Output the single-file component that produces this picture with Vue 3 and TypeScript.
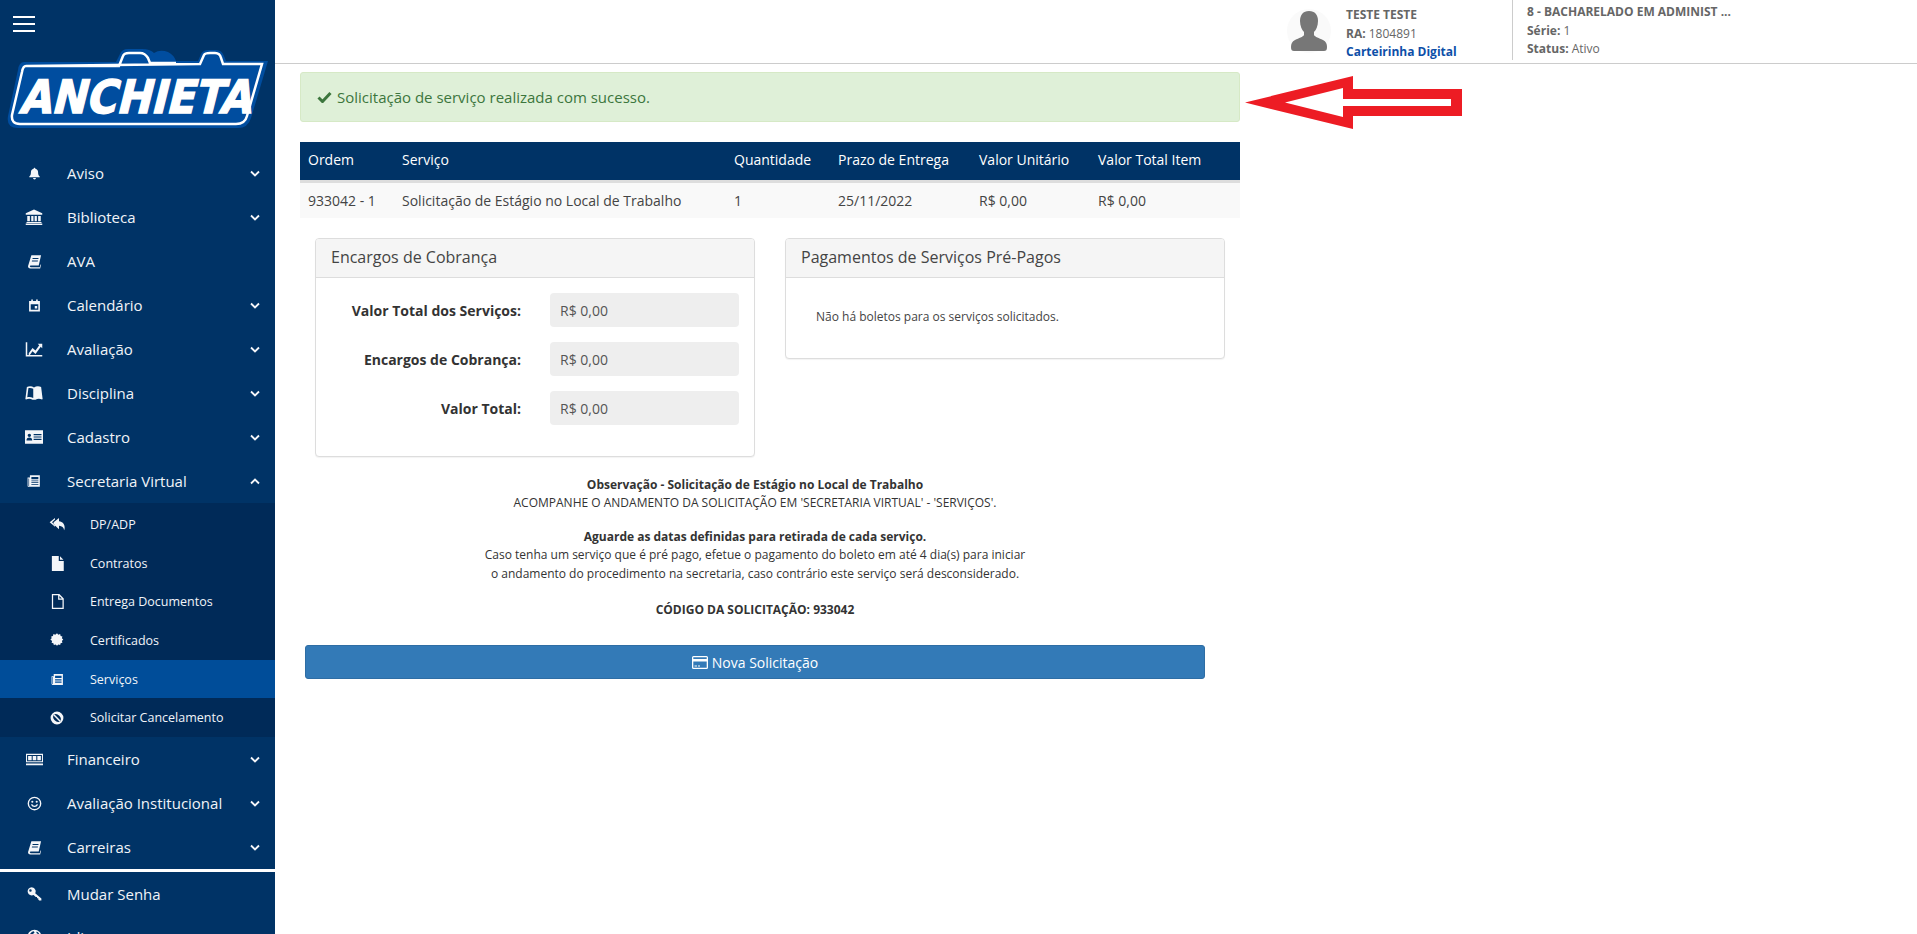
<script setup lang="ts">
interface MenuItem { label: string; icon: string; w: number; chevron?: 'down' | 'up' }

const icons: Record<string, string> = {
  bell: 'M12 1.5a1.6 1.6 0 0 1 1.6 1.7c3.4.7 5 3.2 5 6.3 0 4 1 6.3 3 8v1.5H2.400v-1.500c2-1.700 3-4 3-8 0-3.100 1.600-5.600 5-6.300A1.600 1.600 0 0 1 12 1.500zM9.300 20.500h5.400a2.700 2.700 0 0 1-5.400 0z',
  bank: 'M12 2 23 7v2H1V7zM3 10.500h3.500v7H3zM8.300 10.500h3v7h-3zM12.800 10.500h3v7h-3zM17.500 10.500H21v7h-3.500zM2 18.500h20V20H2zM1 20.800h22V22.500H1z',
  book: 'M7 2h15.500l-3.800 16.500H6c-1 0-1.500.6-1.500 1.200S5 21 6 21h14.500l1-4.300 1 .6L21 23H5.500C3 23 1.300 21.500 1.700 19zM9 6.500 8.700 8h9.500l.3-1.500zM8 10.500 7.700 12h9.500l.3-1.500z',
  calendar: 'M6 1h3v2.500h6V1h3v2.500h4V23H2V3.500h4zM5 9.500V20h14V9.500zM12.500 13h4.500v4.500h-4.500z',
  chart: 'M1 3h2v17h20v2H1zM5 17.500l5-7 4 3.500 5-7-2-2h6v6l-2-2-7 9.500-4-3.500-3.500 5H5z',
  open: 'M2.500 4c3-1.200 6.500-1.200 9.500.5 3-1.700 6.500-1.700 9.500-.5l2 16-.8.700c-3-1.300-6.200-1.200-8.700.3h-4c-2.500-1.500-5.700-1.600-8.700-.3L.5 20zM4.500 5.500 3 17.800c2.700-.6 5-.4 8 1V6.400C8.800 5.200 6.500 5 4.500 5.500z',
  card: 'M0 3h24v18H0zM11.500 8v1.600H22V8zM11.500 11.200v1.600H22v-1.600zM11.500 14.400V16H22v-1.600zM5.800 7.500a2.300 2.300 0 1 0 0 4.600 2.300 2.300 0 0 0 0-4.600zM2 16.500h7.600c0-2.500-1.300-4-3.800-4S2 14 2 16.500z',
  news: 'M5 2h17v20H3a2 2 0 0 1-2-2V6h4zM2.500 7.500V20c0 .4.300.5.500.5s.6-.1.6-.5V7.500zM7.500 5v4H19.500V5zM7.500 11v1.500h12V11zM7.500 14v1.500h12V14zM7.500 17v1.500h12V17z',
  reply: 'M9 3v2.200L4.600 9.500 9 13.800V16L1 9.500zM15 3v5c5.500.4 8.500 4.500 8.500 9.500 0 1.300-.2 2.500-.8 3.800-.7-3.800-3-6.300-7.700-6.500v5L7 12.500 7 9.500z',
  file: 'M3 0h11v8h8v16H3zM16 .5l5.500 5.500H16z',
  fileo: 'M3 0h12l7 7v17H3zM5 2v20h15V9h-7V2zM15 3v4h4z',
  cert: 'M12 .5l2.300 2.300 3.100-.9.800 3.100 3.100.8-.9 3.100 2.300 2.300-2.300 2.300.9 3.100-3.100.8-.8 3.100-3.100-.9-2.300 2.400-2.300-2.400-3.100.9-.8-3.100-3.100-.8.9-3.100L.6 11.200l2.300-2.300-.9-3.100 3.100-.8.8-3.100 3.100.9z',
  ban: 'M12 1a11 11 0 1 1 0 22 11 11 0 0 1 0-22zM7 5.200A8.500 8.500 0 0 0 18.800 17zM17 18.800 5.200 7A8.500 8.500 0 0 1 17 18.800z',
  money: 'M0 4h24v12H0zM1.500 5.500v9h21v-9zM3 7h5v6H3zM9.500 7h5v6h-5zM16 7h5v6h-5zM0 17.500h24V20H0z',
  smile: 'M12 1a11 11 0 1 1 0 22 11 11 0 0 1 0-22zM12 3.200a8.800 8.800 0 1 0 0 17.600 8.800 8.800 0 0 0 0-17.600zM8.500 7.500a1.700 1.700 0 1 1 0 3.400 1.700 1.700 0 0 1 0-3.400zM15.500 7.500a1.700 1.700 0 1 1 0 3.400 1.700 1.700 0 0 1 0-3.400zM6.500 13.500l1.800-.6c.8 1.800 2 2.500 3.700 2.500s2.900-.7 3.700-2.500l1.800.6c-1 2.800-3 4-5.500 4s-4.500-1.200-5.500-4z',
  key: 'M7.500 2a6.500 6.500 0 0 1 6 4.200 6.500 6.500 0 0 1-.4 5.300l9.900 8.400V23h-3.500l-1.500-1.500V19.500h-2v-2h-2l-3.500-3.200A6.500 6.500 0 1 1 7.500 2zM5.500 5a2 2 0 1 0 0 4 2 2 0 0 0 0-4z',
  globe: 'M12 1a11 11 0 1 1 0 22 11 11 0 0 1 0-22zM8 4.500 5 7.500l1 3 4 1 1.500 3-1.500 3 2 3 1.500-3 3-3-2.500-3-3-1.500L9.500 8 12 6l-1-2.500zM15.500 4l-.5 2.500 2.500 1.500 2 3.500.5-2.500A9 9 0 0 0 15.500 4z',
}

const mainItems: MenuItem[] = [
  { label: 'Aviso', icon: 'bell', w: 13, chevron: 'down' },
  { label: 'Biblioteca', icon: 'bank', w: 18, chevron: 'down' },
  { label: 'AVA', icon: 'book', w: 15 },
  { label: 'Calendário', icon: 'calendar', w: 13, chevron: 'down' },
  { label: 'Avaliação', icon: 'chart', w: 18, chevron: 'down' },
  { label: 'Disciplina', icon: 'open', w: 18, chevron: 'down' },
  { label: 'Cadastro', icon: 'card', w: 18, chevron: 'down' },
  { label: 'Secretaria Virtual', icon: 'news', w: 14, chevron: 'up' },
]
const subItems: { label: string; icon: string; w: number; active?: boolean }[] = [
  { label: 'DP/ADP', icon: 'reply', w: 16 },
  { label: 'Contratos', icon: 'file', w: 15 },
  { label: 'Entrega Documentos', icon: 'fileo', w: 15 },
  { label: 'Certificados', icon: 'cert', w: 14 },
  { label: 'Serviços', icon: 'news', w: 13, active: true },
  { label: 'Solicitar Cancelamento', icon: 'ban', w: 14 },
]
const lowerItems: MenuItem[] = [
  { label: 'Financeiro', icon: 'money', w: 17, chevron: 'down' },
  { label: 'Avaliação Institucional', icon: 'smile', w: 15, chevron: 'down' },
  { label: 'Carreiras', icon: 'book', w: 15, chevron: 'down' },
]
const bottomItems: MenuItem[] = [
  { label: 'Mudar Senha', icon: 'key', w: 15 },
  { label: 'Idioma', icon: 'globe', w: 15 },
]
const columns = ['Ordem', 'Serviço', 'Quantidade', 'Prazo de Entrega', 'Valor Unitário', 'Valor Total Item']
const colWidths = [94, 332, 104, 141, 119, 150]
const rowCells = ['933042 - 1', 'Solicitação de Estágio no Local de Trabalho', '1', '25/11/2022', 'R$ 0,00', 'R$ 0,00']
const charges = ['Valor Total dos Serviços:', 'Encargos de Cobrança:', 'Valor Total:']
</script>

<template>
  <div class="page">
    <aside class="sidebar">
      <div class="burger"><span></span><span></span><span></span></div>
      <svg class="logo" width="264" height="84" viewBox="0 0 264 84">
        <path class="logo-out" d="M20 14H112L116 6Q118 1 124 1H138Q146 1 150 5Q156 1 164 4Q170 7 172 13H194L197 6Q199 2 205 2H212Q218 2 220 8L222 13H264L247 70Q244 80 234 80H14Q2 80 4 68L14 22Q15 14 20 14Z" />
        <path class="logo-line" d="M22 18H115L119 8Q120 5 125 5H136Q141 5 144 10L146 15H172M196 16L200 7Q201 5 206 5H211Q216 5 217 10L219 16H258L243 68Q241 76 232 76H16Q7 76 8 67L18 24Q19 18 22 18Z" />
        <text x="130" y="65" text-anchor="middle" textLength="232" lengthAdjust="spacingAndGlyphs" class="logo-text" transform="skewX(-14) translate(17 0)">ANCHIETA</text>
      </svg>

      <nav class="menu">
        <div v-for="item in mainItems" :key="item.label" class="row">
          <span class="ico"><svg :width="item.w" :height="item.w" viewBox="0 0 24 24"><path :d="icons[item.icon]" fill-rule="evenodd" /></svg></span>
          <span class="label">{{ item.label }}</span>
          <svg v-if="item.chevron" class="chev" width="10" height="7" viewBox="0 0 10 7"><path :d="item.chevron === 'down' ? 'M1 1.500 5 5.500 9 1.500' : 'M1 5.500 5 1.500 9 5.500'" /></svg>
        </div>
        <div class="sub">
          <div v-for="s in subItems" :key="s.label" class="subrow" :class="{ active: s.active }">
            <span class="subico"><svg :width="s.w" :height="s.w" viewBox="0 0 24 24"><path :d="icons[s.icon]" fill-rule="evenodd" /></svg></span>
            <span class="sublabel">{{ s.label }}</span>
          </div>
        </div>
        <div v-for="item in lowerItems" :key="item.label" class="row">
          <span class="ico"><svg :width="item.w" :height="item.w" viewBox="0 0 24 24"><path :d="icons[item.icon]" fill-rule="evenodd" /></svg></span>
          <span class="label">{{ item.label }}</span>
          <svg class="chev" width="10" height="7" viewBox="0 0 10 7"><path d="M1 1.500 5 5.500 9 1.500" /></svg>
        </div>
        <div class="sep"></div>
        <div v-for="item in bottomItems" :key="item.label" class="row bottom">
          <span class="ico"><svg :width="item.w" :height="item.w" viewBox="0 0 24 24"><path :d="icons[item.icon]" fill-rule="evenodd" /></svg></span>
          <span class="label">{{ item.label }}</span>
        </div>
      </nav>
    </aside>

    <main class="main">
      <header class="top">
        <div class="user">
          <svg class="avatar" width="44" height="44" viewBox="0 0 44 44">
            <circle cx="22" cy="22" r="22" fill="#fafafa" />
            <path d="M22 2c6 0 9 4 9 10 0 5-2 9-4 11v3c1 2 5 3 9 5 3 1.500 4 4 4 7 0 3-1 4-3 4H7c-2 0-3-1-3-4 0-3 1-5.500 4-7 4-2 8-3 9-5v-3c-2-2-4-6-4-11 0-6 3-10 9-10z" fill="#777" />
          </svg>
          <div class="user-text">
            <div class="b line">TESTE TESTE</div>
            <div class="line"><b>RA:</b> 1804891</div>
            <a class="link line">Carteirinha Digital</a>
          </div>
        </div>
        <div class="course">
          <div class="b line">8 - BACHARELADO EM ADMINIST ...</div>
          <div class="line"><b>Série:</b> 1</div>
          <div class="line"><b>Status:</b> Ativo</div>
        </div>
      </header>

      <section class="content">
        <div class="alert">
          <svg class="check" width="15" height="12" viewBox="0 0 15 12"><path d="M1.500 6.500 5.500 10.500 13.500 2" /></svg>
          Solicitação de serviço realizada com sucesso.
        </div>

        <table class="grid">
          <colgroup><col v-for="w in colWidths" :key="w" :style="{ width: w + 'px' }" /></colgroup>
          <thead><tr><th v-for="c in columns" :key="c">{{ c }}</th></tr></thead>
          <tbody><tr><td v-for="c in rowCells" :key="c + Math.random()">{{ c }}</td></tr></tbody>
        </table>

        <div class="panels">
          <div class="panel">
            <div class="panel-head">Encargos de Cobrança</div>
            <div class="panel-body form">
              <div v-for="c in charges" :key="c" class="form-row">
                <label>{{ c }}</label>
                <div class="field">R$ 0,00</div>
              </div>
            </div>
          </div>
          <div class="panel">
            <div class="panel-head">Pagamentos de Serviços Pré-Pagos</div>
            <div class="panel-body empty">Não há boletos para os serviços solicitados.</div>
          </div>
        </div>

        <div class="notes">
          <p><b>Observação - Solicitação de Estágio no Local de Trabalho</b><br />ACOMPANHE O ANDAMENTO DA SOLICITAÇÃO EM 'SECRETARIA VIRTUAL' - 'SERVIÇOS'.</p>
          <p><b>Aguarde as datas definidas para retirada de cada serviço.</b><br />Caso tenha um serviço que é pré pago, efetue o pagamento do boleto em até 4 dia(s) para iniciar<br />o andamento do procedimento na secretaria, caso contrário este serviço será desconsiderado.</p>
          <p><b>CÓDIGO DA SOLICITAÇÃO: 933042</b></p>
        </div>

        <button class="btn">
          <svg width="16" height="13" viewBox="0 0 16 13"><path d="M1.500 0h13A1.500 1.500 0 0 1 16 1.500v10a1.500 1.500 0 0 1-1.500 1.500h-13A1.500 1.500 0 0 1 0 11.500v-10A1.500 1.500 0 0 1 1.500 0zM1.300 1.300V3h13.400V1.300zM1.300 5.500v6.200h13.400V5.500zM2.500 9.500h2.500v1H2.500zM6 9.500h2v1H6z" fill="#fff" fill-rule="evenodd" /></svg>
          Nova Solicitação
        </button>
      </section>

      <svg class="arrow" width="218" height="55" viewBox="0 0 218 55">
        <path d="M0 27.500 108 1V14H217V41H108V54ZM40 27.500 98 42V31H206V24H98V13Z" fill="#ed1c24" fill-rule="evenodd" />
      </svg>
    </main>
  </div>
</template>

<style>
html, body { margin: 0; padding: 0; height: 100%; overflow: hidden; background: #fff; }
</style>

<style scoped>
* { box-sizing: border-box; }
.page { display: flex; height: 934px; overflow: hidden; font-family: "Open Sans", "Noto Sans", sans-serif; color: #333; background: #fff; }
.sidebar { width: 275px; flex: none; height: 934px; overflow: hidden; background: #003366; color: #f1f4f8; padding-top: 16px; }
.burger { display: flex; flex-direction: column; gap: 5px; margin-left: 13px; width: 22px; }
.burger span { display: block; height: 2px; background: #fff; }
.logo { display: block; margin: 16px 0 0 4px; }
.logo-out { fill: #004d9f; }
.logo-line { fill: #004d9f; stroke: #fff; stroke-width: 2.500; }
.logo-text { font-family: "DejaVu Sans", sans-serif; font-weight: 700; font-size: 46px; fill: #fff; stroke: #fff; stroke-width: 1.500; }
.menu { margin-top: 19px; }
.row { display: flex; align-items: center; height: 44px; padding-left: 24px; padding-right: 15px; }
.row.bottom { height: 43px; }
.ico { width: 20px; display: flex; justify-content: center; align-items: center; flex: none; margin-right: 23px; }
.ico svg, .subico svg { fill: #f4f6f9; display: block; }
.label { font-size: 15px; white-space: nowrap; }
.chev { margin-left: auto; flex: none; }
.chev path { fill: none; stroke: #f4f6f9; stroke-width: 1.800; }
.sub { background: #002a58; height: 234px; padding-top: 2px; padding-bottom: 0; }
.subrow { display: flex; align-items: center; height: 38.700px; padding-left: 47px; }
.subrow.active { background: #004d99; }
.subico { width: 20px; display: flex; justify-content: center; align-items: center; flex: none; margin-right: 23px; }
.sublabel { font-size: 12.500px; white-space: nowrap; }
.sep { height: 3px; background: #fff; margin-top: 0; }
.main { flex: 1; position: relative; min-width: 0; }
.top { height: 64px; border-bottom: 1px solid #ccc; display: flex; justify-content: flex-end; font-size: 12px; color: #666; }
.line { line-height: 18.500px; white-space: nowrap; display: block; }
.b, b { font-weight: 700; }
.user { display: flex; align-items: flex-start; padding-right: 0; }
.avatar { margin-top: 9px; margin-right: 15px; }
.user-text { width: 166px; padding-top: 6px; }
.link { color: #0d4fa8; font-weight: 700; }
.course { width: 405px; height: 60px; border-left: 1px solid #ccc; padding: 3px 0 0 14px; }
.content { padding: 8px 0 0 25px; }
.alert { width: 940px; height: 50px; background: #dff0d8; border: 1px solid #d6e9c6; border-radius: 3px; color: #3c763d; font-size: 15px; display: flex; align-items: center; gap: 5px; padding-left: 16px; }
.check path { fill: none; stroke: #3c763d; stroke-width: 3; }
.grid { width: 940px; margin-top: 20px; border-collapse: collapse; table-layout: fixed; font-size: 14px; }
.grid th { background: #003366; color: #fff; font-weight: 400; text-align: left; height: 39px; padding: 0 8px 3px; border-bottom: 3px solid #ddd; white-space: nowrap; }
.grid td { background: #f9f9f9; color: #444; height: 37px; padding: 0 8px; white-space: nowrap; }
.panels { display: flex; align-items: flex-start; gap: 30px; padding-left: 15px; margin-top: 20px; }
.panel { width: 440px; border: 1px solid #ddd; border-radius: 4px; box-shadow: 0 1px 1px rgba(0, 0, 0, .05); background: #fff; }
.panel-head { height: 39px; background: #f5f5f5; border-bottom: 1px solid #ddd; padding-left: 15px; font-size: 16px; line-height: 37px; color: #444; border-radius: 3px 3px 0 0; }
.panel-body.form { height: 178px; padding-top: 15px; }
.form-row { display: flex; align-items: center; margin-bottom: 15px; }
.form-row label { width: 205px; text-align: right; font-weight: 700; font-size: 14px; color: #333; margin-right: 29px; }
.field { width: 189px; height: 34px; background: #eee; border-radius: 4px; font-size: 14px; color: #555; line-height: 35px; padding-left: 10px; }
.panel-body.empty { height: 80px; padding: 30px 0 0 30px; font-size: 12px; line-height: 18px; color: #444; }
.notes { width: 910px; margin-top: 19px; text-align: center; font-size: 12px; line-height: 18.400px; color: #333; }
.notes p { margin: 0 0 15px; }
.notes p:last-child { margin: 18px 0 0; }
.btn { display: flex; align-items: center; justify-content: center; gap: 4px; width: 900px; height: 34px; margin: 26px 0 0 5px; background: #337ab7; border: 1px solid #2e6da4; border-radius: 3px; color: #fff; font-family: inherit; font-size: 14px; padding: 0; }
.arrow { position: absolute; left: 970px; top: 75px; }
</style>
